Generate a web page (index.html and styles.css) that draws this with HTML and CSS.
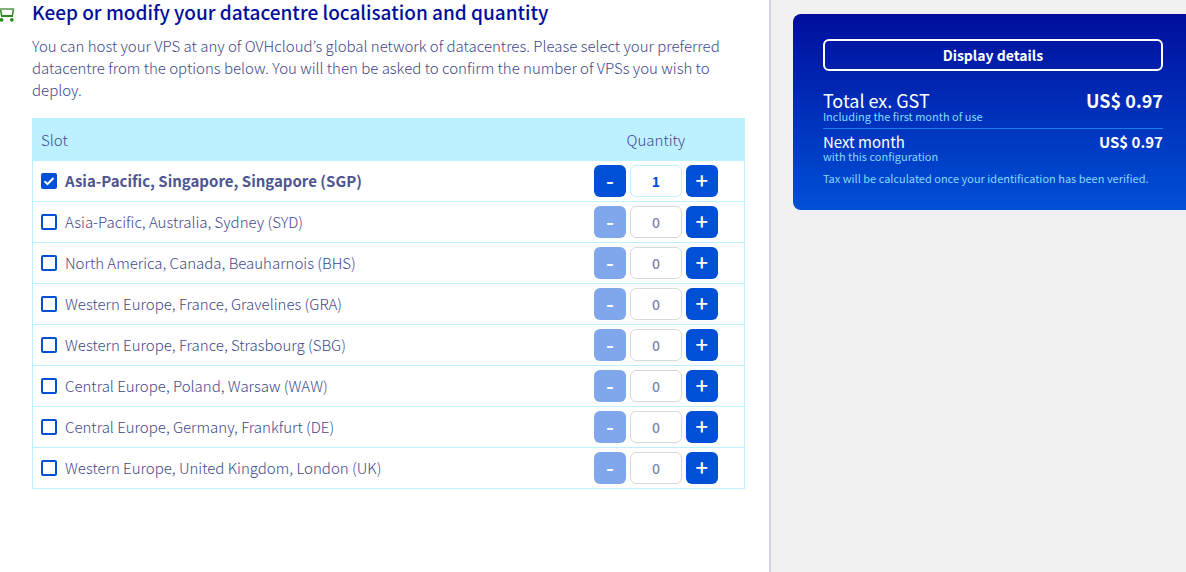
FILE: index.html
```html
<!DOCTYPE html>
<html lang="en">
<head>
<meta charset="utf-8">
<title>Datacentre localisation and quantity</title>
<meta name="viewport" content="width=device-width, initial-scale=1">
<link rel="stylesheet" href="styles.css">
</head>
<body>
<div class="page">
  <main class="content">
    <header class="heading">
      <svg class="cart" width="16" height="14" viewBox="0 0 16 14" aria-hidden="true">
        <path d="M0 1H14.2" fill="none" stroke="#7fae7a" stroke-width="2"/>
        <path d="M13.4 1.5L12.4 7.5M0.6 2L1.6 7.5" fill="none" stroke="#2c8a1e" stroke-width="1.5"/>
        <path d="M1 8H13" fill="none" stroke="#2c8a1e" stroke-width="2"/>
        <circle cx="1.6" cy="11.8" r="1.9" fill="#2c8a1e"/>
        <circle cx="11.8" cy="11.8" r="1.9" fill="#2c8a1e"/>
      </svg>
      <h1 class="title">Keep or modify your datacentre localisation and quantity</h1>
    </header>
    <p class="intro">You can host your VPS at any of OVHcloud’s global network of datacentres. Please select your preferred datacentre from the options below. You will then be asked to confirm the number of VPSs you wish to deploy.</p>
    <table class="slots">
      <thead>
        <tr><th class="slot-head" scope="col">Slot</th><th class="quantity-head" scope="col">Quantity</th></tr>
      </thead>
      <tbody>
        <tr class="selected">
          <td><label class="slot"><input class="check" type="checkbox" checked>Asia-Pacific, Singapore, Singapore (SGP)</label></td>
          <td><div class="stepper"><button class="step" type="button" aria-label="Decrease SGP">-</button><input class="amount" type="text" inputmode="numeric" value="1" aria-label="Quantity SGP"><button class="step" type="button" aria-label="Increase SGP">+</button></div></td>
        </tr>
        <tr>
          <td><label class="slot"><input class="check" type="checkbox">Asia-Pacific, Australia, Sydney (SYD)</label></td>
          <td><div class="stepper"><button class="step" type="button" aria-label="Decrease SYD" disabled>-</button><input class="amount" type="text" inputmode="numeric" value="0" aria-label="Quantity SYD"><button class="step" type="button" aria-label="Increase SYD">+</button></div></td>
        </tr>
        <tr>
          <td><label class="slot"><input class="check" type="checkbox">North America, Canada, Beauharnois (BHS)</label></td>
          <td><div class="stepper"><button class="step" type="button" aria-label="Decrease BHS" disabled>-</button><input class="amount" type="text" inputmode="numeric" value="0" aria-label="Quantity BHS"><button class="step" type="button" aria-label="Increase BHS">+</button></div></td>
        </tr>
        <tr>
          <td><label class="slot"><input class="check" type="checkbox">Western Europe, France, Gravelines (GRA)</label></td>
          <td><div class="stepper"><button class="step" type="button" aria-label="Decrease GRA" disabled>-</button><input class="amount" type="text" inputmode="numeric" value="0" aria-label="Quantity GRA"><button class="step" type="button" aria-label="Increase GRA">+</button></div></td>
        </tr>
        <tr>
          <td><label class="slot"><input class="check" type="checkbox">Western Europe, France, Strasbourg (SBG)</label></td>
          <td><div class="stepper"><button class="step" type="button" aria-label="Decrease SBG" disabled>-</button><input class="amount" type="text" inputmode="numeric" value="0" aria-label="Quantity SBG"><button class="step" type="button" aria-label="Increase SBG">+</button></div></td>
        </tr>
        <tr>
          <td><label class="slot"><input class="check" type="checkbox">Central Europe, Poland, Warsaw (WAW)</label></td>
          <td><div class="stepper"><button class="step" type="button" aria-label="Decrease WAW" disabled>-</button><input class="amount" type="text" inputmode="numeric" value="0" aria-label="Quantity WAW"><button class="step" type="button" aria-label="Increase WAW">+</button></div></td>
        </tr>
        <tr>
          <td><label class="slot"><input class="check" type="checkbox">Central Europe, Germany, Frankfurt (DE)</label></td>
          <td><div class="stepper"><button class="step" type="button" aria-label="Decrease DE" disabled>-</button><input class="amount" type="text" inputmode="numeric" value="0" aria-label="Quantity DE"><button class="step" type="button" aria-label="Increase DE">+</button></div></td>
        </tr>
        <tr>
          <td><label class="slot"><input class="check" type="checkbox">Western Europe, United Kingdom, London (UK)</label></td>
          <td><div class="stepper"><button class="step" type="button" aria-label="Decrease UK" disabled>-</button><input class="amount" type="text" inputmode="numeric" value="0" aria-label="Quantity UK"><button class="step" type="button" aria-label="Increase UK">+</button></div></td>
        </tr>
      </tbody>
    </table>
  </main>
  <aside class="sidebar">
    <section class="summary">
      <button class="details" type="button">Display details</button>
      <div class="line total"><span>Total ex. GST</span><strong>US$ 0.97</strong></div>
      <p class="note">Including the first month of use</p>
      <hr class="rule">
      <div class="line next"><span>Next month</span><strong>US$ 0.97</strong></div>
      <p class="note">with this configuration</p>
      <p class="note tax">Tax will be calculated once your identification has been verified.</p>
    </section>
  </aside>
</div>
</body>
</html>
```
FILE: styles.css
```css
* { box-sizing: border-box; }

body {
  margin: 0;
  background: #fff;
  color: #414a8a;
  font-family: "Noto Sans CJK KR", "Noto Sans", sans-serif;
  font-size: 15px;
  font-weight: 300;
  line-height: 22px;
}

button, input { font: inherit; }

.page {
  display: grid;
  grid-template-columns: 65fr 35fr;
  min-height: 100vh;
}

.content {
  padding: 0 24px 24px 0;
  border-right: 2px solid #d3d3ea;
}

.heading {
  display: flex;
  align-items: center;
  gap: 16px;
}

.cart { flex: none; margin-top: 6px; }

.title {
  margin: 0;
  color: #000e9c;
  font-size: 19px;
  font-weight: 500;
  line-height: 24px;
}

.intro { margin: 11px 0 17px 32px; }

.slots {
  width: calc(100% - 32px);
  margin-left: 32px;
  border: 1px solid #bef1ff;
  border-spacing: 0;
  table-layout: fixed;
}

.slots th {
  height: 42px;
  padding: 0 8px;
  background: #bef1ff;
  font-weight: 300;
}

.slot-head { text-align: left; }
.quantity-head { width: 176px; }

.slots td { padding: 4px 8px; }
.slots tr + tr td { border-top: 1px solid #bef1ff; }

.slot {
  display: flex;
  align-items: center;
  gap: 8px;
}

.selected .slot {
  color: #4d5592;
  font-weight: 700;
}

.check {
  appearance: none;
  flex: none;
  width: 16px;
  height: 16px;
  margin: 0;
  border: 2px solid #0050d7;
  border-radius: 2px;
  background: #fff;
}

.check:checked {
  background: #0050d7 url("data:image/svg+xml,%3Csvg xmlns='http://www.w3.org/2000/svg' viewBox='0 0 12 12'%3E%3Cpath d='M1.5 6.3L4.5 9L10.5 3' fill='none' stroke='white' stroke-width='2'/%3E%3C/svg%3E") center / 12px no-repeat;
}

.stepper {
  display: flex;
  justify-content: center;
  gap: 4px;
}

.step {
  width: 32px;
  height: 32px;
  padding: 0 0 4px;
  border: 0;
  border-radius: 6px;
  background: #0050d7;
  color: #fff;
  font-size: 22px;
  font-weight: 500;
  line-height: 26px;
}

.step:disabled { background: #80a7eb; }

.amount {
  width: 52px;
  height: 32px;
  padding: 0;
  border: 1px solid #d9d9d9;
  border-radius: 6px;
  background: #fff;
  color: #7c85b0;
  font-size: 14px;
  font-weight: 500;
  text-align: center;
}

.selected .amount {
  border-color: #bef1ff;
  color: #0050d7;
  font-weight: 700;
}

.sidebar {
  padding: 14px 0 0 22px;
  background: #f1f1f1;
}

.summary {
  padding: 25px 23px 26px 30px;
  border-radius: 8px 0 0 8px;
  background: linear-gradient(#000e9c, #0050d7);
  color: #fff;
  font-weight: 400;
}

.details {
  display: block;
  width: 100%;
  height: 32px;
  margin-bottom: 19px;
  padding: 0;
  border: 2px solid #fff;
  border-radius: 6px;
  background: transparent;
  color: #fff;
  font-size: 14px;
  font-weight: 700;
  line-height: 28px;
}

.line {
  display: flex;
  justify-content: space-between;
}

.total { font-size: 18px; line-height: 20px; }
.next { font-size: 15px; line-height: 16px; }

.note {
  margin: 0;
  color: #85d9fd;
  font-size: 11px;
  line-height: 12px;
}

.rule {
  margin: 6px 0 5px;
  border: 0;
  border-top: 1px solid #157eea;
}

.tax { margin-top: 10px; }
```
